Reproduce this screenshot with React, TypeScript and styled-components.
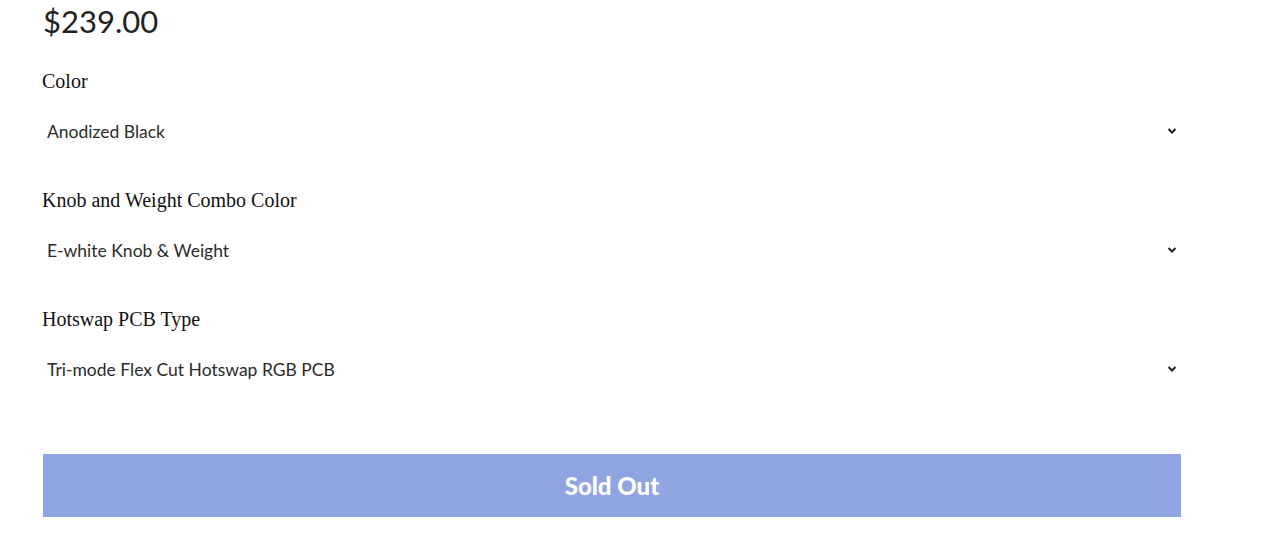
import React from 'react';
import styled, { createGlobalStyle } from 'styled-components';

const GlobalStyle = createGlobalStyle`
  body { margin: 0; background: #fff; }
`;

const Page = styled.div`
  padding: 1px 0 0 43px;
  width: 1138px;
  font-family: "Lato", "Liberation Sans", sans-serif;
  color: #222;
`;

const Price = styled.div`
  font-size: 31px;
  line-height: 40px;
  color: #222;
  margin-bottom: 28px;
`;

const Field = styled.div`
  display: flex;
  flex-direction: column;
  gap: 16px;
  margin-bottom: 35px;
  &:last-of-type { margin-bottom: 63px; }
`;

const Label = styled.label`
  font-family: "Liberation Serif", "Times New Roman", serif;
  font-size: 20px;
  line-height: 24px;
  color: #111;
  margin-left: -1px;
`;

const SelectWrap = styled.div`
  position: relative;
  height: 44px;
`;

const Select = styled.select`
  appearance: none;
  -webkit-appearance: none;
  width: 100%;
  height: 44px;
  border: none;
  background: transparent;
  padding: 0 30px 0 4px;
  font-family: "Lato", "Liberation Sans", sans-serif;
  font-size: 17.5px;
  color: #2b2b2b;
  outline: none;
`;

const Chevron = styled.svg`
  position: absolute;
  right: 4px;
  top: 50%;
  transform: translateY(-50%);
  pointer-events: none;
`;

const SoldOut = styled.button`
  display: block;
  width: 100%;
  height: 63px;
  border: none;
  background: #91a4e2;
  color: #fff;
  font-family: "Lato", "Liberation Sans", sans-serif;
  font-weight: 900;
  font-size: 24px;
  cursor: not-allowed;
`;

const options = [
  { label: 'Color', value: 'Anodized Black' },
  { label: 'Knob and Weight Combo Color', value: 'E-white Knob & Weight' },
  { label: 'Hotswap PCB Type', value: 'Tri-mode Flex Cut Hotswap RGB PCB' },
];

export default function App() {
  return (
    <>
      <GlobalStyle />
      <Page>
        <Price>$239.00</Price>
        {options.map((o) => (
          <Field key={o.label}>
            <Label>{o.label}</Label>
            <SelectWrap>
              <Select defaultValue={o.value}>
                <option>{o.value}</option>
              </Select>
              <Chevron width="10" height="7" viewBox="0 0 10 7">
                <path d="M1.5 1.5 L5 5 L8.5 1.5" fill="none" stroke="#222" strokeWidth="2" />
              </Chevron>
            </SelectWrap>
          </Field>
        ))}
        <SoldOut disabled>Sold Out</SoldOut>
      </Page>
    </>
  );
}
